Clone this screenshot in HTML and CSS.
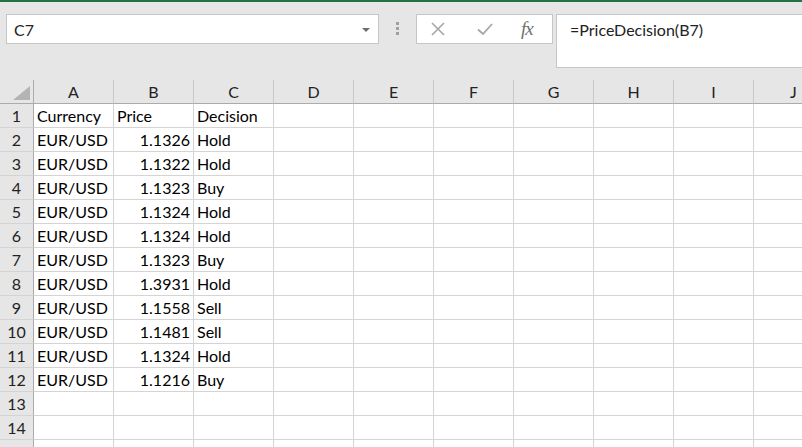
FILE: index.html
```html
<!DOCTYPE html>
<html>
<head>
<meta charset="utf-8">
<link rel="stylesheet" href="styles.css">
</head>
<body>
<div class="topline"></div>
<div class="fbar">
  <div class="namebox">
    <span class="nametext">C7</span>
    <svg class="dd" width="8" height="4" viewBox="0 0 8 4"><path d="M0 0H8L4 4Z" fill="#6e6e6e"/></svg>
  </div>
  <div class="dots"><i></i><i></i><i></i></div>
  <div class="btns">
    <svg class="ico" width="16" height="16" viewBox="0 0 16 16"><path d="M2 2L14 14M14 2L2 14" stroke="#a6a6a6" stroke-width="1.6" fill="none"/></svg>
    <svg class="ico" width="18" height="16" viewBox="0 0 18 16"><path d="M2 8.5L7 13L16 3" stroke="#a6a6a6" stroke-width="1.8" fill="none"/></svg>
    <span class="fx">fx</span>
  </div>
  <div class="formula">=PriceDecision(B7)</div>
</div>
<div class="grid">
  <div class="hdr corner"><svg width="17" height="14" viewBox="0 0 17 14"><path d="M17 0V14H0Z" fill="#b4b4b4"/></svg></div>
  <div class="hdr">A</div><div class="hdr">B</div><div class="hdr">C</div><div class="hdr">D</div><div class="hdr">E</div><div class="hdr">F</div><div class="hdr">G</div><div class="hdr">H</div><div class="hdr">I</div><div class="hdr">J</div>
</div>
<div class="grid body" id="rows"></div>
<script src="app.js"></script>
</body>
</html>
```
FILE: app.js
```js
const data = [
  ["Currency","Price","Decision",true],
  ["EUR/USD","1.1326","Hold"],
  ["EUR/USD","1.1322","Hold"],
  ["EUR/USD","1.1323","Buy"],
  ["EUR/USD","1.1324","Hold"],
  ["EUR/USD","1.1324","Hold"],
  ["EUR/USD","1.1323","Buy"],
  ["EUR/USD","1.3931","Hold"],
  ["EUR/USD","1.1558","Sell"],
  ["EUR/USD","1.1481","Sell"],
  ["EUR/USD","1.1324","Hold"],
  ["EUR/USD","1.1216","Buy"],
  [], [], []
];
const root = document.getElementById('rows');
let html = '';
data.forEach((r, i) => {
  html += '<div class="rh">' + (i + 1) + '</div>';
  for (let c = 0; c < 10; c++) {
    let v = r[c] !== undefined && c < 3 ? r[c] : '';
    let cls = 'cell';
    if (c === 1 && i > 0) cls += ' num';
    html += '<div class="' + cls + '">' + v + '</div>';
  }
});
root.innerHTML = html;
```
FILE: styles.css
```css
html, body {
  margin: 0;
  padding: 0;
  background: #e6e6e6;
  font-family: Lato, "Open Sans", sans-serif;
  overflow: hidden;
  width: 802px;
  height: 447px;
}
.topline {
  height: 2px;
  background: #217346;
}
.fbar {
  display: flex;
  align-items: flex-start;
  padding: 12px 0 0 6px;
  height: 78px;
  box-sizing: border-box;
}
.namebox {
  width: 373px;
  height: 30px;
  box-sizing: border-box;
  background: #fff;
  border: 1px solid #c6c6c6;
  display: flex;
  align-items: center;
  justify-content: space-between;
  padding: 0 8px 0 7px;
}
.nametext {
  font-size: 16px;
  color: #222;
}
.dd { margin-top: 1px; }
.dots {
  width: 3px;
  margin: 8px 0 0 17px;
  display: flex;
  flex-direction: column;
  gap: 2px;
}
.dots i {
  display: block;
  width: 3px;
  height: 3px;
  background: #a0a0a0;
}
.btns {
  margin-left: 17px;
  width: 137px;
  height: 30px;
  box-sizing: border-box;
  background: #fff;
  border: 1px solid #c6c6c6;
  display: flex;
  align-items: center;
  padding-left: 13px;
}
.btns .ico:nth-child(2) { margin-left: 30px; }
.fx {
  margin-left: 27px;
  font-family: "Liberation Serif", serif;
  font-style: italic;
  font-size: 19px;
  color: #707070;
  letter-spacing: -1px;
}
.formula {
  margin-left: 3px;
  flex: 1;
  height: 54px;
  box-sizing: border-box;
  background: #fff;
  border: 1px solid #c6c6c6;
  border-right: none;
  padding: 5px 0 0 13px;
  font-size: 16px;
  color: #222;
}
.grid {
  display: grid;
  grid-template-columns: 34px repeat(10, 80px);
}
.hdr {
  height: 24px;
  box-sizing: border-box;
  border-right: 1px solid #c8c8c8;
  border-bottom: 1px solid #ababab;
  font-size: 16px;
  color: #222;
  text-align: center;
  line-height: 24px;
}
.hdr.corner {
  border-right-color: #ababab;
  position: relative;
}
.hdr.corner svg {
  position: absolute;
  right: 3px;
  bottom: 3px;
}
.rh {
  height: 24px;
  box-sizing: border-box;
  border-right: 1px solid #ababab;
  border-bottom: 1px solid #d4d4d4;
  font-size: 16px;
  color: #222;
  text-align: center;
  line-height: 24px;
}
.cell {
  height: 24px;
  box-sizing: border-box;
  background: #fff;
  border-right: 1px solid #d4d4d4;
  border-bottom: 1px solid #d4d4d4;
  font-size: 16px;
  color: #000;
  line-height: 24px;
  padding: 0 3px;
  white-space: nowrap;
  overflow: hidden;
}
.cell.num {
  text-align: right;
}
```
